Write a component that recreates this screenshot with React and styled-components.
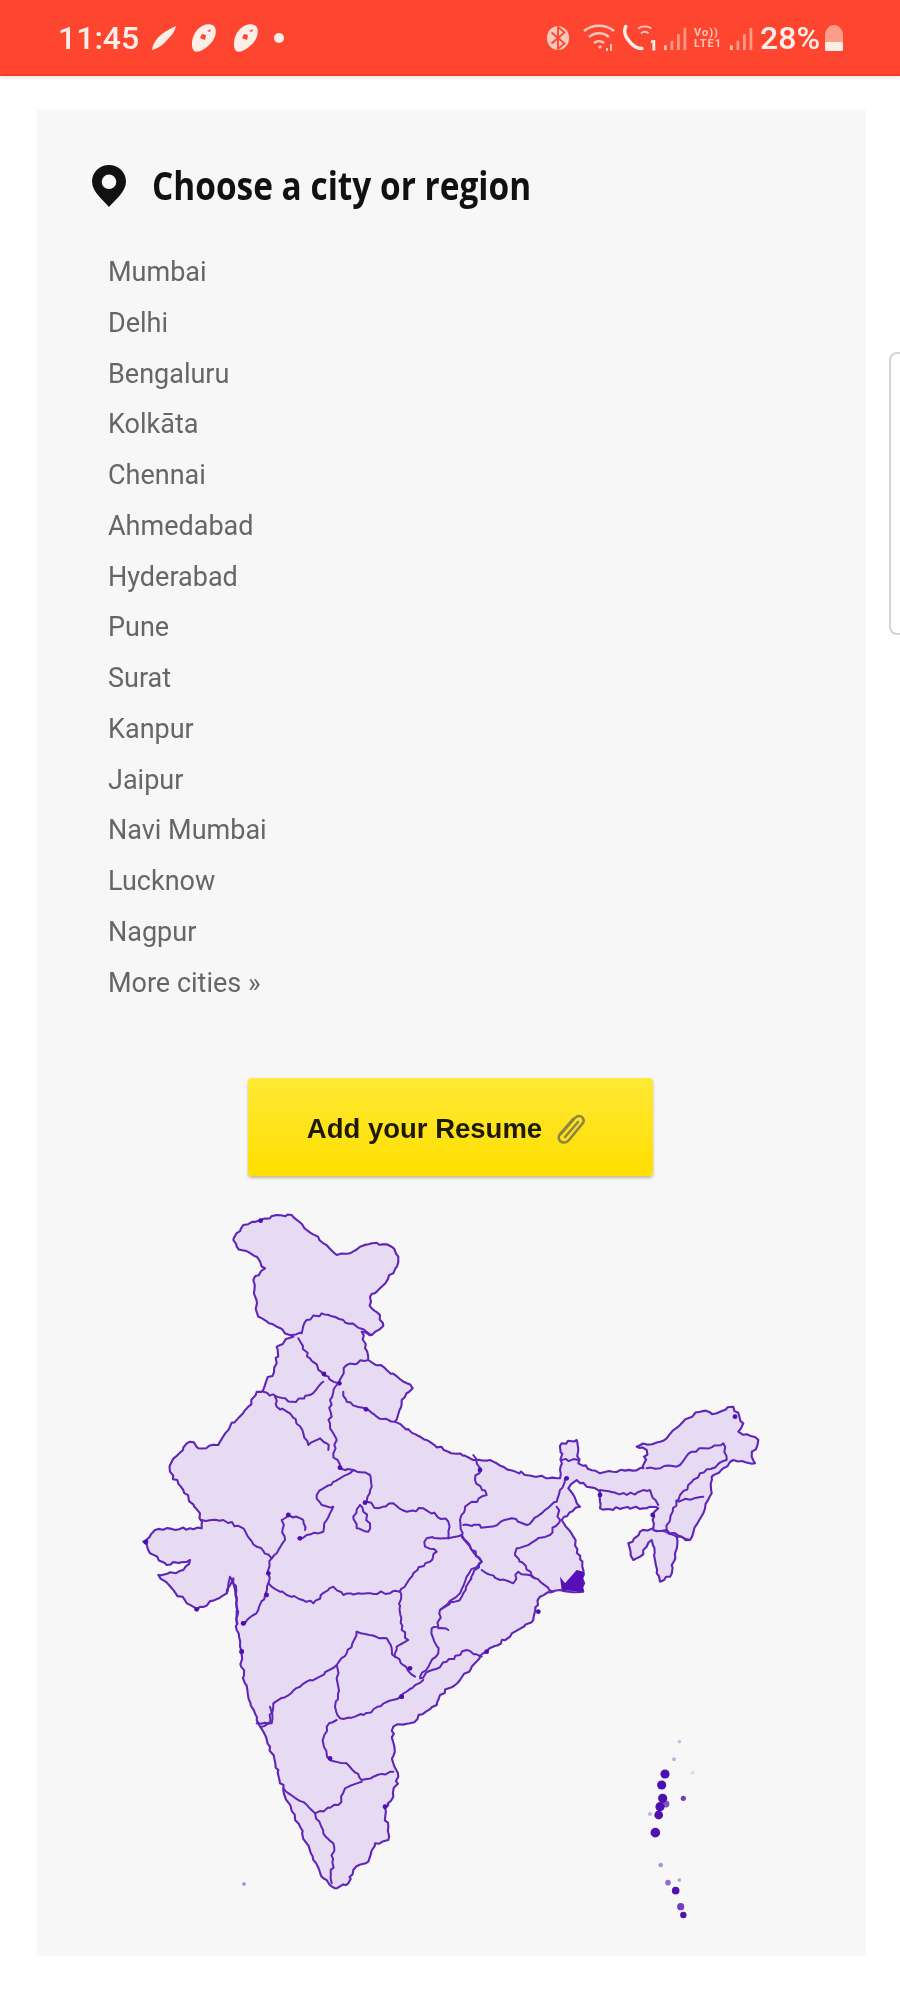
/*
  App recreates a job site's "Choose a city or region" page on a phone: the status bar,
  the city list, the resume button and the map of India.
*/

import React from 'react';
import styled, { createGlobalStyle } from 'styled-components';

const GlobalStyle = createGlobalStyle`
  html, body {
    margin: 0;
    padding: 0;
    background: #fff;
  }
`;

// the whole screenshot is a soft upscale, hence the slight blur
const Page = styled.div`
  position: relative;
  width: 900px;
  height: 2003px;
  overflow: hidden;
  filter: blur(0.6px);
`;

const StatusBar = styled.div`
  display: flex;
  align-items: center;
  justify-content: space-between;
  box-sizing: border-box;
  height: 76px;
  padding: 2px 56px 0 58px;
  background: #fe4530;
  border-bottom: 2px solid #fb3a22;
  box-shadow: 0 2px 3px rgba(0, 0, 0, 0.1);
  color: #fdeee8;
  font-family: Roboto, sans-serif;
  font-weight: 500;
  font-size: 32px;
`;

const StatusGroup = styled.div`
  display: flex;
  align-items: center;
  gap: ${props => props.$gap}px;
`;

const Network = styled.div`
  display: flex;
  flex-direction: column;
  width: 32px;
  font-size: 11px;
  line-height: 11px;
  font-weight: 700;
  letter-spacing: 1px;
  opacity: 0.75;
`;

const Card = styled.div`
  box-sizing: border-box;
  width: 828px;
  height: 1845px;
  margin: 34px 0 0 37px;
  padding: 54px 0 0 55px;
  background: #f7f7f7;
  box-shadow: 0 0 2px rgba(0, 0, 0, 0.06);
`;

const Heading = styled.div`
  display: flex;
  align-items: center;
  gap: 26px;
  height: 44px;
`;

const HeadingText = styled.h2`
  margin: -3px 0 0;
  color: #111;
  font-family: "Open Sans", sans-serif;
  font-weight: 700;
  font-size: 40px;
  white-space: nowrap;
  transform: scaleX(0.835);
  transform-origin: left center;
`;

const CityList = styled.ul`
  list-style: none;
  margin: 39px 0 0 16px;
  padding: 0;
`;

const City = styled.li`
  height: 50.75px;
  line-height: 50.75px;
  color: #666;
  font-family: Roboto, sans-serif;
  font-size: 27px;
`;

const ResumeButton = styled.button`
  display: flex;
  align-items: center;
  justify-content: center;
  gap: 14px;
  box-sizing: border-box;
  width: 405px;
  height: 98px;
  margin: 70px 0 0 156px;
  padding: 3px 8px 0 0;
  border: 0;
  border-radius: 4px;
  background: linear-gradient(#ffe935, #ffde00);
  box-shadow: 0 2px 3px rgba(120, 90, 0, 0.4);
  color: #1c1a00;
  font-family: "Liberation Sans", sans-serif;
  font-weight: 700;
  font-size: 27.5px;
`;

const MapFigure = styled.svg`
  display: block;
  width: 640px;
  height: 730px;
  margin: 24px 0 0 38px;
`;

const Land = styled.path`
  fill: #e6dbf3;
  stroke: #5f25b8;
  stroke-width: 2.1;
  stroke-linejoin: round;
`;

const Border = styled.path`
  fill: none;
  stroke: #5f25b8;
  stroke-width: 2;
  stroke-linejoin: round;
  stroke-linecap: round;
`;

const Delta = styled.polygon`
  fill: #5410b4;
`;

const Spot = styled.circle`
  fill: #4f10b2;
  opacity: ${props => props.$opacity || 1};
`;

const SideTab = styled.div`
  position: absolute;
  top: 352px;
  left: 889px;
  width: 20px;
  height: 283px;
  box-sizing: border-box;
  border: 2px solid #d4d4d4;
  border-radius: 8px;
  background: #fff;
`;

const cities = [
  'Mumbai', 'Delhi', 'Bengaluru', 'Kolkāta', 'Chennai', 'Ahmedabad', 'Hyderabad', 'Pune',
  'Surat', 'Kanpur', 'Jaipur', 'Navi Mumbai', 'Lucknow', 'Nagpur', 'More cities »',
];

// the map was traced in four overlapping crops, each with its own origin at 3x
const north = pts => pts.map(([x, y]) => [120 + x / 3, 1200 + y / 3]);
const east = pts => pts.map(([x, y]) => [440 + x / 3, 1380 + y / 3]);
const south = pts => pts.map(([x, y]) => [220 + x / 3, 1550 + y / 3]);
const west = pts => pts.map(([x, y]) => [130 + x / 3, 1440 + y / 3]);

let seed = 7;
const random = () => {
  seed = (seed * 16807) % 2147483647;
  return (seed / 2147483647) - 0.5;
};

// borders are not smooth in the picture, so break every segment up and shake it a little
const toPath = (points, closed) => {
  const out = [points[0]];
  points.slice(1).concat(closed ? [points[0]] : []).forEach((point, i) => {
    const last = points[i];
    const steps = Math.max(1, Math.round(Math.hypot(point[0] - last[0], point[1] - last[1]) / 4));
    for (let s = 1; s <= steps; s += 1) {
      const t = s / steps;
      const shake = s === steps ? 0 : 3.2;
      out.push([
        last[0] + ((point[0] - last[0]) * t) + (random() * shake),
        last[1] + ((point[1] - last[1]) * t) + (random() * shake),
      ]);
    }
  });
  const line = out.map(([x, y]) => `${x.toFixed(1)} ${y.toFixed(1)}`).join(' L');
  return `M${line}${closed ? 'Z' : ''}`;
};

const outline = [
  ...north([[340, 120], [370, 75], [420, 60], [470, 45], [515, 45], [560, 90], [610, 130], [650, 165], [690, 160], [720, 140], [770, 128], [815, 140], [835, 170], [820, 220], [785, 260], [750, 290], [755, 325], [780, 345], [790, 378], [755, 405], [725, 395], [745, 480], [800, 510], [878, 565], [845, 600], [825, 665], [900, 710], [985, 755], [1050, 775]]),
  ...east([[150, 240], [210, 270], [290, 290], [360, 295], [365, 190], [410, 180], [415, 250], [480, 280], [610, 265], [620, 210], [590, 200], [660, 185], [720, 135], [780, 95], [830, 100], [880, 80], [910, 130], [895, 155], [955, 180], [935, 230], [945, 250], [880, 240], [850, 265], [815, 290], [815, 340], [790, 400], [750, 480], [710, 470], [705, 520], [690, 590], [660, 605], [650, 580], [635, 480], [600, 530], [580, 540], [565, 490], [600, 455], [640, 445], [640, 400], [655, 385], [620, 385], [480, 385], [480, 335], [465, 325], [440, 320], [410, 300], [385, 325], [420, 380], [365, 420], [400, 470], [430, 570], [430, 635], [360, 630], [300, 650], [280, 720], [210, 770], [140, 815]]),
  ...south([[790, 310], [720, 390], [660, 435], [650, 465], [570, 520], [520, 530], [520, 640], [535, 680], [520, 740], [495, 775], [505, 870], [465, 880], [445, 935], [400, 960], [385, 1000], [345, 1015], [310, 985], [280, 930], [240, 830], [190, 720], [150, 590], [110, 510], [75, 400], [50, 240], [50, 150], [40, 85]]),
  ...west([[290, 460], [200, 510], [170, 490], [85, 405], [160, 390], [180, 360], [110, 375], [60, 340], [40, 305], [75, 270], [180, 265], [215, 265], [210, 220], [160, 150], [120, 95], [125, 65], [180, 5]]),
  ...north([[235, 745], [295, 735], [330, 680], [385, 620], [410, 575], [430, 570], [470, 490], [470, 440], [520, 410], [470, 380], [415, 350], [400, 240], [435, 205], [410, 170], [350, 140]]),
];

const borders = [
  north([[515, 405], [545, 400], [560, 360], [605, 340], [670, 360], [720, 385], [755, 405]]),
  north([[535, 415], [570, 475], [610, 525], [655, 550]]),
  north([[745, 480], [680, 495], [665, 530], [655, 550]]),
  north([[430, 575], [470, 590], [515, 605], [570, 585], [610, 545]]),
  north([[670, 575], [680, 605], [735, 625], [770, 650], [825, 665]]),
  north([[465, 590], [470, 620], [510, 640], [550, 700], [565, 735], [600, 715], [620, 730], [625, 750]]),
  north([[650, 555], [630, 600], [630, 670], [650, 720], [640, 760], [660, 800]]),
  west([[630, 85], [670, 90], [720, 105], [725, 140], [710, 185]]),
  west([[670, 90], [610, 125], [560, 165], [575, 195], [610, 200], [590, 240], [580, 275], [530, 285], [505, 295]]),
  west([[525, 270], [520, 240], [475, 225], [455, 240], [465, 300], [440, 340], [425, 355]]),
  west([[215, 240], [280, 240], [340, 265], [380, 320], [425, 355]]),
  west([[425, 355], [415, 400], [415, 430], [405, 465], [385, 510], [345, 550]]),
  west([[415, 430], [470, 465], [550, 490], [610, 440], [640, 465], [720, 460], [810, 455]]),
  west([[810, 455], [850, 400], [900, 365], [920, 335], [885, 320], [890, 295], [955, 295], [955, 245], [880, 205], [830, 215], [790, 190], [745, 205], [710, 185]]),
  west([[690, 195], [670, 230], [680, 265], [715, 275], [720, 250], [700, 215], [690, 195]]),
  west([[955, 295], [995, 285]]),
  west([[810, 455], [815, 570], [835, 600], [800, 620], [795, 650], [855, 710]]),
  west([[995, 285], [1055, 365], [1010, 410], [990, 460], [930, 510], [925, 560], [905, 565], [925, 640], [870, 710]]),
  west([[925, 565], [955, 570]]),
  west([[680, 575], [770, 595], [795, 650]]),
  west([[680, 575], [650, 640], [620, 675], [510, 740], [430, 790], [415, 850], [395, 860]]),
  west([[620, 675], [625, 740], [615, 800], [630, 835], [700, 825], [810, 770], [880, 720]]),
  west([[320, 550], [320, 470], [300, 410], [290, 460]]),
  south([[600, 385], [680, 335], [740, 300], [785, 320]]),
  south([[350, 510], [320, 530], [310, 580], [330, 630], [380, 640], [425, 690], [520, 665]]),
  south([[425, 695], [375, 715], [355, 765], [285, 790]]),
  south([[190, 715], [285, 790], [310, 850], [340, 880], [335, 1000]]),
  south([[110, 520], [155, 520], [150, 470]]),
  east([[100, 225], [120, 270], [105, 300], [140, 345], [75, 380], [60, 420], [65, 470], [125, 545], [100, 580], [65, 650], [0, 690]]),
  east([[70, 435], [150, 440], [215, 415], [260, 435], [315, 390], [350, 365], [360, 330], [375, 295]]),
  east([[350, 380], [360, 420], [330, 465], [230, 505], [225, 525], [285, 595], [340, 635]]),
  east([[125, 570], [180, 600], [220, 610], [235, 575], [285, 595]]),
  east([[365, 240], [415, 240]]),
  east([[620, 265], [720, 255], [755, 215], [850, 190], [860, 240], [780, 280], [720, 345], [690, 420], [680, 450], [640, 450], [710, 470]]),
  east([[715, 365], [790, 350]]),
  east([[680, 450], [750, 480]]),
  east([[480, 330], [560, 345], [630, 330], [655, 375]]),
];

const delta = east([[360, 590], [375, 610], [410, 570], [430, 575], [430, 635], [365, 630]]);

const spots = [
  ...north([[422, 62], [612, 522], [658, 550], [738, 628], [660, 803], [735, 908], [540, 1015], [505, 945]]),
  ...east([[380, 295], [885, 110], [120, 270], [480, 345], [638, 405]]),
  ...south([[65, 305], [145, 70], [70, 220], [330, 625], [545, 440], [495, 770], [955, 185], [800, 305], [570, 355]]),
  ...west([[48, 306], [200, 508], [340, 550], [335, 635], [410, 465], [815, 770]]),
];

const islands = [
  [195, 222, 4.600, 1], [185, 255, 4.600, 1], [188, 295, 4.600, 1], [180, 320, 4.600, 1],
  [198, 312, 3.400, 0.7], [176, 345, 4.400, 1], [166, 398, 4.800, 1], [250, 295, 2.600, 0.8],
  [227, 572, 3.800, 1], [204, 548, 2.800, 0.6], [242, 620, 3.600, 0.8], [250, 645, 3.200, 1],
  [182, 495, 2.200, 0.45], [238, 125, 1.800, 0.25], [222, 178, 2, 0.3], [238, 540, 1.800, 0.4],
  [150, 342, 2, 0.3], [278, 218, 2, 0.12],
].map(([x, y, r, o]) => ({ x: 600 + (x / 3), y: 1700 + (y / 3), r, o }));

const Pin = () => (
  <svg width="34" height="42" viewBox="0 0 34 42">
    <path
      fillRule="evenodd"
      fill="#111"
      d="M17 0C7.6 0 0 7.4 0 16.6 0 27 11 35 17 42c6-7 17-15 17-25.400C34 7.400 26.400 0 17 0zm0 9.500a7.300 7.300 0 1 1 0 14.600 7.300 7.300 0 0 1 0-14.600z"
    />
  </svg>
);

const Clip = () => (
  <svg width="30" height="32" viewBox="0 0 30 32" fill="none" stroke="#8f8741" strokeWidth="2.600" strokeLinecap="round">
    <path d="M5 21 19 5c2.500-2.800 6.200-2.600 7.800 0 1.400 2 .9 4.400-.8 6.200L13 27c-2.600 3-6.400 3.200-8.600 1.200-2.300-2-2.200-5.100-.2-7.400L17 6" />
    <path d="M9 24 22 9" />
  </svg>
);

const Pen = () => (
  <svg width="26" height="26" viewBox="0 0 26 26">
    <path fill="#fdeee8" d="M1 25c1-7 5-12 10-16 4-3 9-6 14-8-1 5-4 9-8 13-4 5-9 9-16 11z" />
  </svg>
);

const Blob = () => (
  <svg width="30" height="30" viewBox="0 0 30 30">
    <path fill="#fdeee8" fillRule="evenodd" d="M5 28C1 23 3 12 9 6c5-5 12-6 16-3 4 5 1 14-5 19-5 5-11 8-15 6zM11 15l5 2 1-5-4-1zM18 8l3 1 1-3z" />
  </svg>
);

const Dot = () => (
  <svg width="12" height="12" viewBox="0 0 12 12">
    <circle cx="6" cy="6" r="5" fill="#fdeee8" />
  </svg>
);

const Bluetooth = () => (
  <svg width="24" height="30" viewBox="0 0 26 30">
    <ellipse cx="13" cy="15" rx="12" ry="13" fill="#f7c9bd" />
    <path d="M6 9l14 12-7 6V3l7 6L6 21" fill="none" stroke="#fe4530" strokeWidth="2" />
  </svg>
);

const Wifi = () => (
  <svg width="42" height="28" viewBox="-8 0 42 28" fill="none" stroke="#f7c9bd" strokeWidth="2.500">
    <path d="M2 7c8-7 22-7 30 0M7 13c6-5 14-5 20 0M12 19c3-2.500 7-2.500 10 0" />
    <path d="M17 24l2-2" />
    <path d="M25 24v3M29 20v7" strokeWidth="2" />
  </svg>
);

const Phone = () => (
  <svg width="40" height="30" viewBox="0 0 42 30">
    <path fill="none" stroke="#fdeee8" strokeWidth="3.600" strokeLinecap="round" d="M6 3C3 9 7 16 12 21c3 3 7 5 11 5" />
    <path fill="none" stroke="#f7c9bd" strokeWidth="2" d="M19 5c4-3 10-3 14 0M22 10c2.500-2 5.500-2 8 0" />
    <path fill="#fdeee8" d="M33 17h4v11h-3V20h-2z" />
  </svg>
);

const Signal = () => (
  <svg width="26" height="28" viewBox="0 0 28 28" fill="#fe9a86">
    <rect x="0" y="22" width="3" height="5" fill="#f7c9bd" />
    <rect x="7" y="17" width="3" height="10" />
    <rect x="14" y="10" width="3" height="17" />
    <rect x="21" y="3" width="3" height="24" />
  </svg>
);

const Battery = () => (
  <svg width="20" height="28" viewBox="0 0 20 28">
    <path fill="#fb9e8c" d="M1 11C1 6 5 1 10 1s9 5 9 10v7H1z" />
    <rect x="1" y="18" width="18" height="9" rx="1" fill="#fdeee8" />
  </svg>
);

const App = () => (
  <Page>
    <GlobalStyle />
    <StatusBar>
      <StatusGroup $gap={12}>
        <span>11:45</span>
        <Pen />
        <Blob />
        <Blob />
        <Dot />
      </StatusGroup>
      <StatusGroup $gap={4}>
        <Bluetooth />
        <Wifi />
        <Phone />
        <Signal />
        <Network>
          <span>Vo))</span>
          <span>LTE1</span>
        </Network>
        <Signal />
        <span>28%</span>
        <Battery />
      </StatusGroup>
    </StatusBar>
    <Card>
      <Heading>
        <Pin />
        <HeadingText>Choose a city or region</HeadingText>
      </Heading>
      <CityList>
        {cities.map(city => <City key={city}>{city}</City>)}
      </CityList>
      <ResumeButton>
        Add your Resume
        <Clip />
      </ResumeButton>
      <MapFigure viewBox="130 1200 640 730">
        <Land d={toPath(outline, true)} />
        {borders.map(border => <Border key={border[0].join()} d={toPath(border, false)} />)}
        <Delta points={delta.map(p => p.join(',')).join(' ')} />
        {spots.map(([x, y]) => <Spot key={`${x},${y}`} cx={x} cy={y} r="2.4" />)}
        <Spot cx="244" cy="1884" r="1.8" $opacity={0.5} />
        {islands.map(dot => <Spot key={`${dot.x},${dot.y}`} cx={dot.x} cy={dot.y} r={dot.r} $opacity={dot.o} />)}
      </MapFigure>
    </Card>
    <SideTab />
  </Page>
);

export default App;
